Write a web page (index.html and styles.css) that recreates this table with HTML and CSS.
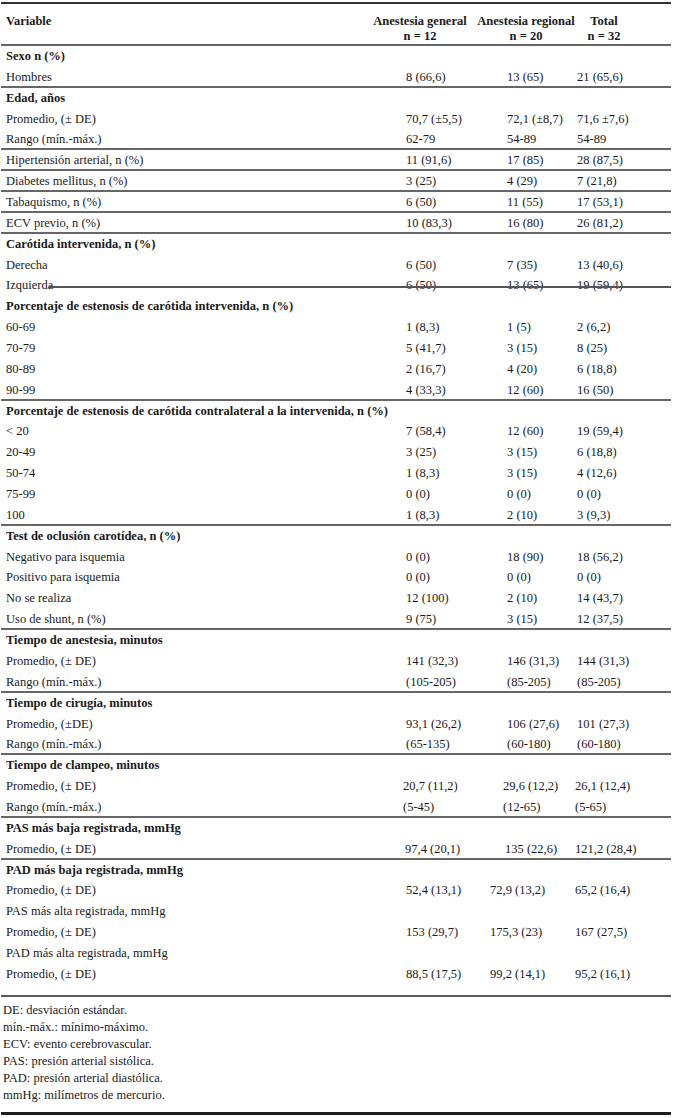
FILE: index.html
```html
<!DOCTYPE html>
<html lang="es">
<head>
<meta charset="utf-8">
<title>Tabla</title>
<link rel="stylesheet" href="styles.css">
</head>
<body>
<div class="table">
  <div class="head">
    <div class="h-label">Variable</div>
    <div class="h-col">Anestesia general<br>n = 12</div>
    <div class="h-col">Anestesia regional<br>n = 20</div>
    <div class="h-col">Total<br>n = 32</div>
  </div>
  <div class="body">
    <div class="row section"><div class="label">Sexo n (%)</div></div>
    <div class="row ruled"><div class="label">Hombres</div><div>8 (66,6)</div><div>13 (65)</div><div>21 (65,6)</div></div>
    <div class="row section"><div class="label">Edad, años</div></div>
    <div class="row"><div class="label">Promedio, (± DE)</div><div>70,7 (±5,5)</div><div>72,1 (±8,7)</div><div>71,6 ±7,6)</div></div>
    <div class="row ruled"><div class="label">Rango (mín.-máx.)</div><div>62-79</div><div>54-89</div><div>54-89</div></div>
    <div class="row ruled"><div class="label">Hipertensión arterial, n (%)</div><div>11 (91,6)</div><div>17 (85)</div><div>28 (87,5)</div></div>
    <div class="row ruled"><div class="label">Diabetes mellitus, n (%)</div><div>3 (25)</div><div>4 (29)</div><div>7 (21,8)</div></div>
    <div class="row ruled"><div class="label">Tabaquismo, n (%)</div><div>6 (50)</div><div>11 (55)</div><div>17 (53,1)</div></div>
    <div class="row ruled"><div class="label">ECV previo, n (%)</div><div>10 (83,3)</div><div>16 (80)</div><div>26 (81,2)</div></div>
    <div class="row section"><div class="label">Carótida intervenida, n (%)</div></div>
    <div class="row"><div class="label">Derecha</div><div>6 (50)</div><div>7 (35)</div><div>13 (40,6)</div></div>
    <div class="row struck"><div class="label">Izquierda</div><div>6 (50)</div><div>13 (65)</div><div>19 (59,4)</div></div>
    <div class="row section"><div class="label">Porcentaje de estenosis de carótida intervenida, n (%)</div></div>
    <div class="row"><div class="label">60-69</div><div>1 (8,3)</div><div>1 (5)</div><div>2 (6,2)</div></div>
    <div class="row"><div class="label">70-79</div><div>5 (41,7)</div><div>3 (15)</div><div>8 (25)</div></div>
    <div class="row"><div class="label">80-89</div><div>2 (16,7)</div><div>4 (20)</div><div>6 (18,8)</div></div>
    <div class="row ruled"><div class="label">90-99</div><div>4 (33,3)</div><div>12 (60)</div><div>16 (50)</div></div>
    <div class="row section"><div class="label">Porcentaje de estenosis de carótida contralateral a la intervenida, n (%)</div></div>
    <div class="row"><div class="label">&lt; 20</div><div>7 (58,4)</div><div>12 (60)</div><div>19 (59,4)</div></div>
    <div class="row"><div class="label">20-49</div><div>3 (25)</div><div>3 (15)</div><div>6 (18,8)</div></div>
    <div class="row"><div class="label">50-74</div><div>1 (8,3)</div><div>3 (15)</div><div>4 (12,6)</div></div>
    <div class="row"><div class="label">75-99</div><div>0 (0)</div><div>0 (0)</div><div>0 (0)</div></div>
    <div class="row ruled"><div class="label">100</div><div>1 (8,3)</div><div>2 (10)</div><div>3 (9,3)</div></div>
    <div class="row section"><div class="label">Test de oclusión carotídea, n (%)</div></div>
    <div class="row"><div class="label">Negativo para isquemia</div><div>0 (0)</div><div>18 (90)</div><div>18 (56,2)</div></div>
    <div class="row"><div class="label">Positivo para isquemia</div><div>0 (0)</div><div>0 (0)</div><div>0 (0)</div></div>
    <div class="row"><div class="label">No se realiza</div><div>12 (100)</div><div>2 (10)</div><div>14 (43,7)</div></div>
    <div class="row ruled"><div class="label">Uso de shunt, n (%)</div><div>9 (75)</div><div>3 (15)</div><div>12 (37,5)</div></div>
    <div class="row section"><div class="label">Tiempo de anestesia, minutos</div></div>
    <div class="row"><div class="label">Promedio, (± DE)</div><div>141 (32,3)</div><div>146 (31,3)</div><div>144 (31,3)</div></div>
    <div class="row ruled"><div class="label">Rango (mín.-máx.)</div><div>(105-205)</div><div>(85-205)</div><div>(85-205)</div></div>
    <div class="row section"><div class="label">Tiempo de cirugía, minutos</div></div>
    <div class="row"><div class="label">Promedio, (±DE)</div><div>93,1 (26,2)</div><div>106 (27,6)</div><div>101 (27,3)</div></div>
    <div class="row ruled"><div class="label">Rango (mín.-máx.)</div><div>(65-135)</div><div>(60-180)</div><div>(60-180)</div></div>
    <div class="row section"><div class="label">Tiempo de clampeo, minutos</div></div>
    <div class="row clamp"><div class="label">Promedio, (± DE)</div><div>20,7 (11,2)</div><div>29,6 (12,2)</div><div>26,1 (12,4)</div></div>
    <div class="row clamp ruled"><div class="label">Rango (mín.-máx.)</div><div>(5-45)</div><div>(12-65)</div><div>(5-65)</div></div>
    <div class="row section"><div class="label">PAS más baja registrada, mmHg</div></div>
    <div class="row low ruled"><div class="label">Promedio, (± DE)</div><div>97,4 (20,1)</div><div>135 (22,6)</div><div>121,2 (28,4)</div></div>
    <div class="row section"><div class="label">PAD más baja registrada, mmHg</div></div>
    <div class="row pad"><div class="label">Promedio, (± DE)</div><div>52,4 (13,1)</div><div>72,9 (13,2)</div><div>65,2 (16,4)</div></div>
    <div class="row plain"><div class="label">PAS más alta registrada, mmHg</div></div>
    <div class="row pad"><div class="label">Promedio, (± DE)</div><div>153 (29,7)</div><div>175,3 (23)</div><div>167 (27,5)</div></div>
    <div class="row plain"><div class="label">PAD más alta registrada, mmHg</div></div>
    <div class="row pad"><div class="label">Promedio, (± DE)</div><div>88,5 (17,5)</div><div>99,2 (14,1)</div><div>95,2 (16,1)</div></div>
  </div>
  <div class="notes">
    <p>DE: desviación estándar.</p>
    <p>mín.-máx.: mínimo-máximo.</p>
    <p>ECV: evento cerebrovascular.</p>
    <p>PAS: presión arterial sistólica.</p>
    <p>PAD: presión arterial diastólica.</p>
    <p>mmHg: milímetros de mercurio.</p>
  </div>
</div>
</body>
</html>
```

FILE: styles.css
```css
html, body {
  margin: 0;
  padding: 0;
  background: #ffffff;
}

body {
  font-family: "Liberation Serif", "Times New Roman", serif;
  font-size: 12.5px;
  color: #1a1a1a;
}

.table {
  width: 670px;
  margin: 2px 0 0 1px;
  border-top: 2px solid #333333;
}

.head {
  display: grid;
  grid-template-columns: 369px 100px 112px 44px;
  padding: 10px 0 1px;
  border-bottom: 2px solid #666666;
  font-weight: bold;
  line-height: 14.5px;
}

.h-label {
  padding-left: 5px;
}

.h-col {
  text-align: center;
  white-space: nowrap;
}

.body {
  padding-bottom: 10px;
  border-bottom: 2px solid #5c5c5c;
}

.row {
  position: relative;
  display: grid;
  grid-template-columns: 405px 101px 70px 1fr;
  height: 20.86px;
  line-height: 20.86px;
  white-space: nowrap;
}

.row .label {
  padding-left: 5px;
}

.row.section .label,
.row.plain .label {
  grid-column: 1 / -1;
}

.row.section .label {
  font-weight: bold;
}

.row.ruled {
  box-shadow: inset 0 -2px 0 #666666;
}

.row.struck::after {
  content: "";
  position: absolute;
  left: 48px;
  right: 0;
  top: 11px;
  height: 2px;
  background: #555555;
}

.row.clamp {
  grid-template-columns: 402px 100px 72px 1fr;
}

.row.low {
  grid-template-columns: 404px 100px 70px 1fr;
}

.row.pad {
  grid-template-columns: 405px 84px 85px 1fr;
}

.notes {
  padding: 5px 0 8px 2px;
  border-bottom: 3px solid #1e1e1e;
}

.notes p {
  margin: 0;
  line-height: 17.1px;
}
```
